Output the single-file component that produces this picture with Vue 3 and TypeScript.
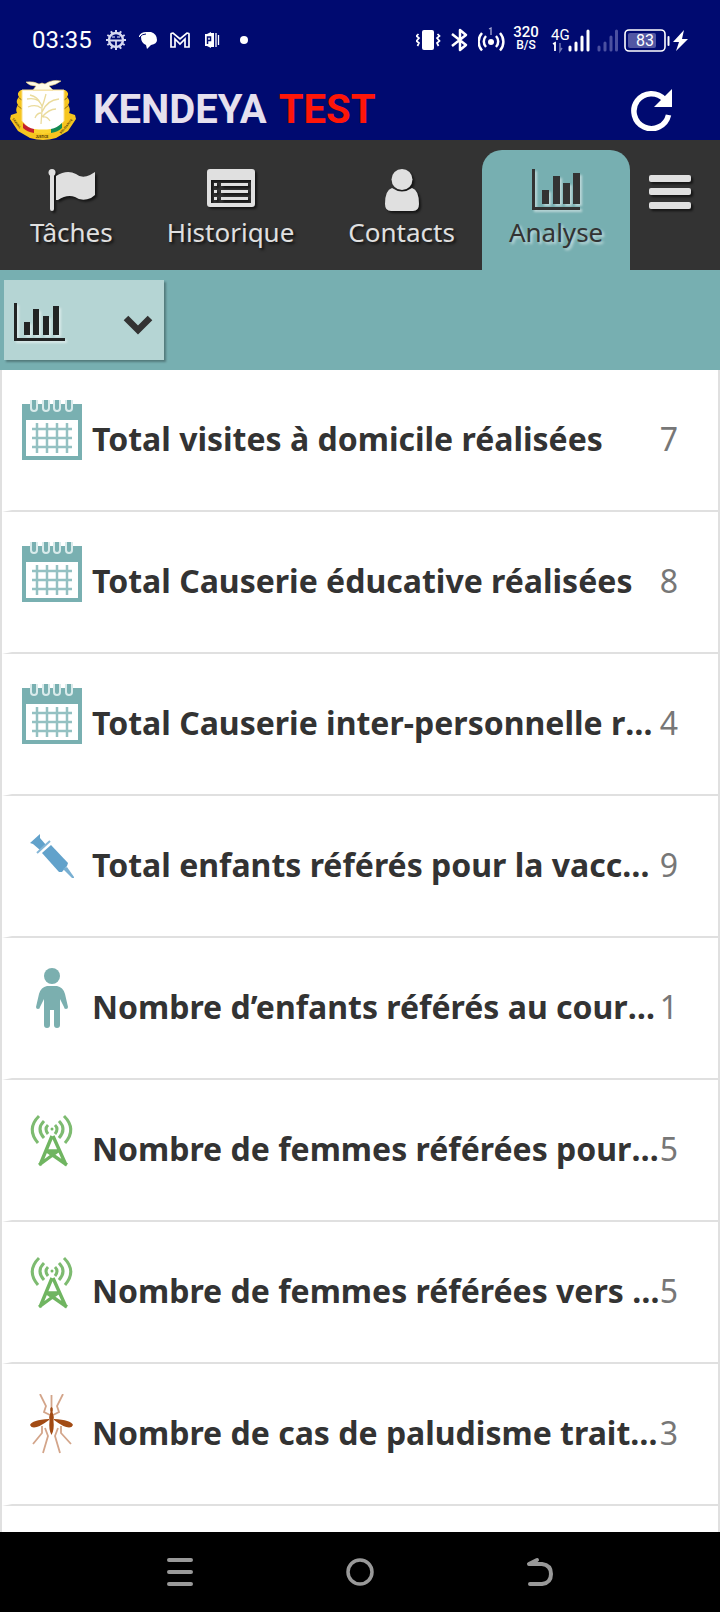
<script setup lang="ts">
import { ref } from 'vue'

type TabIcon = 'flag' | 'list' | 'person' | 'chart'
type TargetIcon = 'calendar' | 'syringe' | 'child' | 'antenna' | 'mosquito'

interface Tab {
  id: string
  label: string
  icon: TabIcon
}

interface Target {
  title: string
  shortened?: boolean
  value: number
  icon: TargetIcon
}

const tabs: Tab[] = [
  { id: 'taches', label: 'Tâches', icon: 'flag' },
  { id: 'historique', label: 'Historique', icon: 'list' },
  { id: 'contacts', label: 'Contacts', icon: 'person' },
  { id: 'analyse', label: 'Analyse', icon: 'chart' },
]

const activeTab = ref('analyse')

const targets: Target[] = [
  { title: 'Total visites à domicile réalisées', value: 7, icon: 'calendar' },
  { title: 'Total Causerie éducative réalisées', value: 8, icon: 'calendar' },
  { title: 'Total Causerie inter-personnelle r', shortened: true, value: 4, icon: 'calendar' },
  { title: 'Total enfants référés pour la vacc', shortened: true, value: 9, icon: 'syringe' },
  { title: 'Nombre d’enfants référés au cour', shortened: true, value: 1, icon: 'child' },
  { title: 'Nombre de femmes référées pour', shortened: true, value: 5, icon: 'antenna' },
  { title: 'Nombre de femmes référées vers ', shortened: true, value: 5, icon: 'antenna' },
  { title: 'Nombre de cas de paludisme trait', shortened: true, value: 3, icon: 'mosquito' },
]

const calendarColumns = [15, 25, 35, 45]
const calendarRows = [29, 38, 47]
const calendarRings = [12, 24, 35, 47]
const gearTeeth = [0, 30, 60, 90, 120, 150, 180, 210, 240, 270, 300, 330]
</script>

<template>
  <div class="screen">
    <div class="status">
      <span class="clock">03:35</span>
      <div class="notices">
        <svg width="20" height="24" viewBox="0 0 20 24" aria-hidden="true">
          <g fill="#d5d8f0">
            <rect v-for="a in gearTeeth" :key="a" x="9" y="2" width="2" height="3" :transform="`rotate(${a} 10 12)`" />
          </g>
          <circle cx="10" cy="12" r="7" fill="none" stroke="#d5d8f0" stroke-width="2.400" />
          <path d="M4 12.500h12M10 12v6" stroke="#d5d8f0" stroke-width="1.800" />
          <path d="M6 9h3M11 9h3" stroke="#a5aad8" stroke-width="1.500" />
        </svg>
        <svg width="20" height="24" viewBox="0 0 20 24" aria-hidden="true">
          <path d="M1 8Q3 4 8 4h5q6 2 6 8 0 4-6 5l-4 4-1-4Q3 15 3 9L1 9z" fill="#fff" />
          <path d="M2 9Q4 6 8 6" stroke="#000a70" fill="none" />
        </svg>
        <svg width="20" height="24" viewBox="0 0 20 24" aria-hidden="true">
          <path d="M1 19V6q0-1 2-1l7 6 7-6q2 0 2 1v13h-4v-8l-5 5-5-5v8z" fill="none" stroke="#fff" stroke-width="1.700" />
        </svg>
        <svg width="20" height="24" viewBox="0 0 20 24" aria-hidden="true">
          <path d="M3 6h2l4-2v16l-4-2H3zM9 5h3v14H9z" fill="#fff" />
          <path d="M5.500 16V9h3v3.500h-3" fill="none" stroke="#000a70" stroke-width="1.500" />
          <path d="M14 5v14M16.500 7v10" stroke="#fff" stroke-width="1.300" />
        </svg>
        <svg width="20" height="24" viewBox="0 0 20 24" aria-hidden="true">
          <circle cx="10" cy="12" r="4" fill="#fff" />
        </svg>
      </div>
      <div class="indicators">
        <svg width="28" height="28" viewBox="0 0 28 28" aria-hidden="true">
          <rect x="6" y="4" width="12" height="20" rx="2" fill="#fff" />
          <path d="M2.500 8l-2 2 2.500 2-2.500 3 2.500 2-1.500 3M21.500 8l2 2-2.500 2 2.500 3-2.500 2 1.500 3" fill="none" stroke="#fff" stroke-width="1.700" />
        </svg>
        <svg width="22" height="28" viewBox="0 0 22 28" aria-hidden="true">
          <path d="M2 8l14 11-6 5V4l6 5L2 20" fill="none" stroke="#fff" stroke-width="2.500" stroke-linejoin="round" />
        </svg>
        <svg width="28" height="34" viewBox="0 0 28 34" aria-hidden="true">
          <circle cx="13" cy="19" r="3" fill="#fff" />
          <path d="M8 13a8 8 0 000 11M18 13a8 8 0 010 11M4 10a13 13 0 000 17.500M22 10a13 13 0 010 17.500" fill="none" stroke="#fff" stroke-width="2.500" />
          <path d="M11 6l2-1v7" fill="none" stroke="#a9acd6" stroke-width="1.300" />
        </svg>
        <div class="rate"><span class="rate-value">320</span><span class="rate-unit">B/S</span></div>
        <svg width="40" height="30" viewBox="0 0 40 30" aria-hidden="true">
          <text x="1" y="15" class="network">4G</text>
          <path d="M3 19l2-1v8" fill="none" stroke="#fff" stroke-width="1.800" />
          <path d="M10 18v8l2-3" fill="none" stroke="#7076b4" stroke-width="1.500" />
          <path d="M20 25v-3M26 25v-7M32 25V12M38 25V6" stroke="#fff" stroke-width="3" stroke-linecap="round" />
        </svg>
        <svg width="22" height="30" viewBox="0 0 22 30" aria-hidden="true">
          <path d="M3 25v-3M9 25v-7M15 25V12M20.500 25V6" stroke="#4b50a0" stroke-width="3" stroke-linecap="round" />
        </svg>
        <svg width="64" height="30" viewBox="0 0 64 30" aria-hidden="true">
          <rect x="1" y="5" width="40" height="21" rx="4" fill="none" stroke="#fff" stroke-width="1.600" />
          <rect x="4" y="8" width="28" height="15" rx="2" fill="#5257a3" />
          <path d="M44.500 12v8" stroke="#fff" stroke-width="2" stroke-linecap="round" />
          <text x="21" y="21" text-anchor="middle" class="battery">83</text>
          <path d="M60 5L49 17h6l-3 9 12-12h-6l2-9z" fill="#fff" />
        </svg>
      </div>
    </div>

    <header class="header">
      <svg class="emblem" width="66" height="60" viewBox="0 0 66 60" role="img" aria-label="Armoiries">
        <path d="M11 10q-5 3-2 7-4 4-1 8-3 4-1 8l-6 2-1 4 8 12 12 7q13 4 26 0l12-7 8-12-1-4-6-2q2-4-1-8 3-4-1-8 3-4-2-7z" fill="#f6c51f" />
        <path d="M7 25l6 5M8 17l5 4M59 25l-6 5M58 17l-5 4" stroke="#8a6b10" stroke-width="1" />
        <path d="M12 10h42v31q-7 10-21 12-14-2-21-12z" fill="#fff" stroke="#fbe08a" stroke-width="1" />
        <path d="M16 2q8-1 13 2l3-1 3 1q7-5 16-3-5 4-12 5l4 4H23l3-4Q19 6 16 2z" fill="#fffbe8" stroke="#e2c877" stroke-width=".6" />
        <path d="M17 19q12-2 15 7 0 8-1 18M49 19q-12 1-17 13M36 14q-2 8-4 13M18 27q8-3 13 1M46 29q-7 0-14 8M20 15q8 2 10 8M25 38q2-5 6-5M40 41q-3-5-7-4" fill="none" stroke="#eadb9c" stroke-width="1.300" />
        <path d="M13 43q5 5 11 6v4q-7-1-11-5z" fill="#c4202e" />
        <path d="M24 49q9 1 17 0v4q-8 1-17 0z" fill="#fbd32d" />
        <path d="M52 43q-5 5-11 6v4q7-1 11-5z" fill="#128a54" />
        <g class="motto">
          <text x="32" y="58" text-anchor="middle">JUSTICE</text>
          <text x="2" y="39" transform="rotate(52 2 39)">TRAVAIL</text>
          <text x="51" y="54" transform="rotate(-50 51 54)">SOLIDARITE</text>
        </g>
      </svg>
      <h1 class="brand"><span>KENDEYA</span> <span class="brand-mode">TEST</span></h1>
      <button class="refresh" type="button" aria-label="Actualiser">
        <svg width="42" height="42" viewBox="0 0 42 42" aria-hidden="true">
          <path d="M33.500 10.500A17.500 17.500 0 1 0 37.500 26" fill="none" stroke="#fff" stroke-width="5.500" />
          <path d="M41 0v18H23z" fill="#fff" />
        </svg>
      </button>
    </header>

    <nav class="tabs" aria-label="Navigation principale">
      <a
        v-for="tab in tabs"
        :key="tab.id"
        class="tab"
        :class="{ active: tab.id === activeTab }"
        :href="`#${tab.id}`"
        :aria-current="tab.id === activeTab ? 'page' : undefined"
        @click.prevent="activeTab = tab.id"
      >
        <svg class="tab-icon" width="48" height="42" viewBox="0 0 48 42" fill="currentColor" aria-hidden="true">
          <g v-if="tab.icon === 'flag'">
            <circle cx="5" cy="3.500" r="3.500" />
            <path d="M3 4h4v36q0 2-2 2t-2-2z" />
            <path d="M9 7Q20 0 29 5q6 5 14 1l5-3v23l-4 3q-9 4-16-1-8-3-17 3H9z" />
          </g>
          <path
            v-else-if="tab.icon === 'list'"
            fill-rule="evenodd"
            d="M3 0h42q3 0 3 3v32q0 3-3 3H3q-3 0-3-3V3q0-3 3-3zM4 11v23h40V11zM7 14h3v3H7zM14 14h27v3H14zM7 21h3v3H7zM14 21h27v3H14zM7 28h3v3H7zM14 28h27v3H14z"
          />
          <g v-else-if="tab.icon === 'person'">
            <path d="M14 19q10 7 20 0 7 2 7 16 0 7-6 7H13q-6 0-6-7 0-14 7-16z" />
            <circle cx="24" cy="10.500" r="10.500" />
          </g>
          <path v-else d="M0 0h3v38h45v3H0zM10 21h7v14h-7zM21 7h7v28h-7zM31 14h7v21h-7zM41 4h7v31h-7z" />
        </svg>
        <span>{{ tab.label }}</span>
      </a>
      <button class="menu" type="button" aria-label="Menu">
        <svg width="42" height="35" viewBox="0 0 42 35" fill="currentColor" aria-hidden="true">
          <rect width="42" height="7" rx="2" />
          <rect y="13" width="42" height="7" rx="2" />
          <rect y="27" width="42" height="7" rx="2" />
        </svg>
      </button>
    </nav>

    <div class="filters">
      <button class="filter" type="button" aria-haspopup="menu" aria-label="Choisir une analyse">
        <svg class="filter-chart" width="52" height="38" viewBox="0 0 52 38" fill="#222424" aria-hidden="true">
          <path d="M0 0h3v35h48v3H0zM10 19h6v13h-6zM19 6h6v26h-6zM29 13h6v19h-6zM39 3h6v29h-6z" />
        </svg>
        <svg width="30" height="26" viewBox="0 -6 30 26" aria-hidden="true">
          <path d="M3 3l12 12L27 3" fill="none" stroke="#333" stroke-width="6.500" />
        </svg>
      </button>
    </div>

    <main class="content">
      <ul class="targets">
        <li v-for="target in targets" :key="target.title" class="target">
          <svg class="target-icon" width="60" height="60" viewBox="0 0 60 60" aria-hidden="true">
            <g v-if="target.icon === 'calendar'">
              <path d="M0 4h60v56H0z" fill="#79b0b1" />
              <g v-for="x in calendarRings" :key="x">
                <path :d="`M${x - 4} 0v8q0 4 4 4t4-4V0z`" fill="#d9ebeb" />
                <path :d="`M${x - 2} 0v8q0 2 2 2t2-2V0z`" fill="#79b0b1" />
              </g>
              <path d="M4 20h52v36H4z" fill="#fff" />
              <path v-for="x in calendarColumns" :key="`c${x}`" :d="`M${x} 23v30`" stroke="#94c1c2" stroke-width="2.500" />
              <path v-for="y in calendarRows" :key="`r${y}`" :d="`M10 ${y}h40`" stroke="#94c1c2" stroke-width="2.500" />
            </g>
            <g v-else-if="target.icon === 'syringe'" fill="#62a2cb">
              <path d="M8 17L18 8v4l6 7-6 5-7-6z" />
              <path d="M15 27L28 15" stroke="#84b6d7" stroke-width="2" />
              <path d="M20 27l9-8 17 18-1 3-5 6h-3z" />
              <path d="M41 43l4-2 7 10v1h-2z" fill="#78afd2" />
            </g>
            <g v-else-if="target.icon === 'child'" fill="#7bafaf">
              <circle cx="30" cy="8" r="8" />
              <path d="M25 18h10q6 1 8 8l3 13q0 2-2 2t-2-2l-4-8v26q0 3-3 3t-3-3V42h-4v15q0 3-3 3t-3-3V31l-4 8q0 2-2 2t-2-2l3-13q2-7 8-8z" />
            </g>
            <g v-else-if="target.icon === 'antenna'" fill="none" stroke="#7dbb70" stroke-width="3">
              <path d="M17 6q-13 13-1 27M22 11q-8 8 0 17M26 15q-4 4 0 9M42 6q13 13 1 27M37 11q8 8 0 17M33 15q4 4 0 9" />
              <path d="M30 26L18 55M31 26l13 29M17 55l19-14M45 55L25 41M25 41h11" stroke="#70b561" stroke-width="3.400" />
              <circle cx="30" cy="19" r="1.500" fill="#76b968" stroke="none" />
            </g>
            <g v-else>
              <path d="M18 0l6 12-2 6 6 3M41 0l-6 12 2 6-6 3M29.500 1v14M11 50l9-11v-7M49 50L39 39v-7M21 59l5-17-3-8M38 59l-5-17 3-8" fill="none" stroke="#d3a58a" stroke-width="1.800" />
              <path d="M27 25Q10 26 8 31q3 7 19-5zM32 25q17 1 19 6-3 7-19-5z" fill="#a24b14" />
              <path d="M29.500 13q2 1 1 5 2 5 1 9 1 9-2 14-3-5-2-14-1-4 1-9-1-4 1-5z" fill="#a24b14" />
            </g>
          </svg>
          <h2 class="target-title">{{ target.title }}<span v-if="target.shortened" class="more">…</span></h2>
          <span class="target-value">{{ target.value }}</span>
        </li>
      </ul>
    </main>

    <div class="system">
      <button type="button" aria-label="Applications récentes">
        <svg width="28" height="30" viewBox="0 0 28 30" aria-hidden="true">
          <path d="M3 3h22M3 15h22M3 27h22" stroke="#999" stroke-width="4" stroke-linecap="round" />
        </svg>
      </button>
      <button type="button" aria-label="Accueil">
        <svg width="28" height="30" viewBox="0 0 28 30" aria-hidden="true">
          <circle cx="14" cy="15" r="12" fill="none" stroke="#999" stroke-width="3.500" />
        </svg>
      </button>
      <button type="button" aria-label="Retour">
        <svg width="28" height="30" viewBox="0 0 28 30" aria-hidden="true">
          <path d="M11 3L3 7h13q9 1 9 10t-9 10H4" fill="none" stroke="#999" stroke-width="4" stroke-linecap="round" stroke-linejoin="round" />
        </svg>
      </button>
    </div>
  </div>
</template>

<style>
body {
  margin: 0;
}
</style>

<style scoped>
.screen {
  display: flex;
  flex-direction: column;
  min-height: 100vh;
  background: #fff;
  color: #333;
  font-family: "Noto Sans", "Open Sans", sans-serif;
}

svg {
  display: block;
  flex: none;
}

button {
  margin: 0;
  padding: 0;
  border: 0;
  background: none;
  color: inherit;
  font: inherit;
  cursor: pointer;
}

.status {
  display: flex;
  align-items: center;
  height: 80px;
  padding: 0 32px;
  background: #000a70;
  color: #fff;
  font-family: Roboto, sans-serif;
}

.clock {
  margin-right: 14px;
  font-size: 24px;
  line-height: 32px;
}

.notices {
  display: flex;
  align-items: center;
  gap: 12px;
}

.indicators {
  display: flex;
  align-items: center;
  gap: 6px;
  margin-left: auto;
}

.rate {
  display: flex;
  flex-direction: column;
  align-items: center;
  width: 28px;
  margin-right: 4px;
  padding-bottom: 4px;
  font-weight: 500;
}

.rate-value {
  font-size: 15px;
  line-height: 14px;
}

.rate-unit {
  font-size: 12px;
  line-height: 12px;
}

.network {
  fill: #fff;
  font-size: 15px;
}

.battery {
  fill: #fff;
  font-size: 16px;
}

.header {
  display: flex;
  align-items: center;
  height: 60px;
  padding: 0 47px 0 10px;
  background: #000a70;
}

.emblem {
  overflow: visible;
}

.motto {
  fill: #3a2c05;
  font-family: "Liberation Sans", sans-serif;
  font-size: 3px;
  font-weight: 700;
}

.brand {
  display: flex;
  gap: 12px;
  margin: 0 0 0 17px;
  color: #e6e0ee;
  font-family: Roboto, sans-serif;
  font-size: 40px;
  font-weight: 700;
  line-height: 56px;
  white-space: nowrap;
}

.brand-mode {
  color: #ff1608;
}

.refresh {
  margin-left: auto;
}

.tabs {
  display: flex;
  height: 130px;
  padding-left: 3px;
  background: #333;
  color: #e0e0e0;
}

.tab {
  display: flex;
  flex-direction: column;
  align-items: center;
  gap: 3px;
  margin-top: 10px;
  padding: 19px 27px 0;
  border-radius: 20px 20px 0 0;
  color: inherit;
  font-size: 26px;
  line-height: 36px;
  text-decoration: none;
  text-shadow: 2px 2px 3px rgba(0, 0, 0, 0.7);
}

.tab-icon,
.menu svg {
  filter: drop-shadow(2px 2px 1px rgba(0, 0, 0, 0.6));
}

.tab.active {
  background: #77afb1;
  color: #333;
  text-shadow: 2px 2px 3px rgba(255, 255, 255, 0.6);
}

.active .tab-icon,
.filter-chart {
  filter: drop-shadow(2px 2px 1px rgba(255, 255, 255, 0.5));
}

.menu {
  display: flex;
  flex: 1;
  justify-content: center;
  padding: 35px 10px 0 0;
}

.filters {
  display: flex;
  padding: 10px 4px;
  background: #77afb1;
}

.filter {
  display: flex;
  align-items: center;
  justify-content: space-between;
  width: 160px;
  height: 80px;
  padding: 4px 11px 0 10px;
  background: #b5d5d4;
  box-shadow: 2px 2px 2px rgba(0, 0, 0, 0.3);
}

.content {
  flex: 1;
  border: solid #e0e0e0;
  border-width: 0 2px;
}

.targets {
  margin: 0;
  padding: 0;
  list-style: none;
}

.target {
  display: flex;
  align-items: flex-start;
  box-sizing: border-box;
  height: 142px;
  padding: 30px 40px 0 10px;
  border-bottom: 2px solid #e0e0e0;
  border-left: 10px solid transparent;
}

.target-title {
  flex: 1;
  min-width: 0;
  margin: 0;
  padding: 17px 0 0 10px;
  font-size: 32px;
  font-weight: 700;
  line-height: 44px;
  white-space: nowrap;
}

.more {
  display: inline-block;
}

.target-value {
  padding-top: 17px;
  color: #777;
  font-size: 32px;
  line-height: 44px;
}

.system {
  display: flex;
  height: 80px;
  padding: 0 12.5%;
  background: #000;
}

.system button {
  display: flex;
  flex: 1;
  align-items: center;
  justify-content: center;
}
</style>
